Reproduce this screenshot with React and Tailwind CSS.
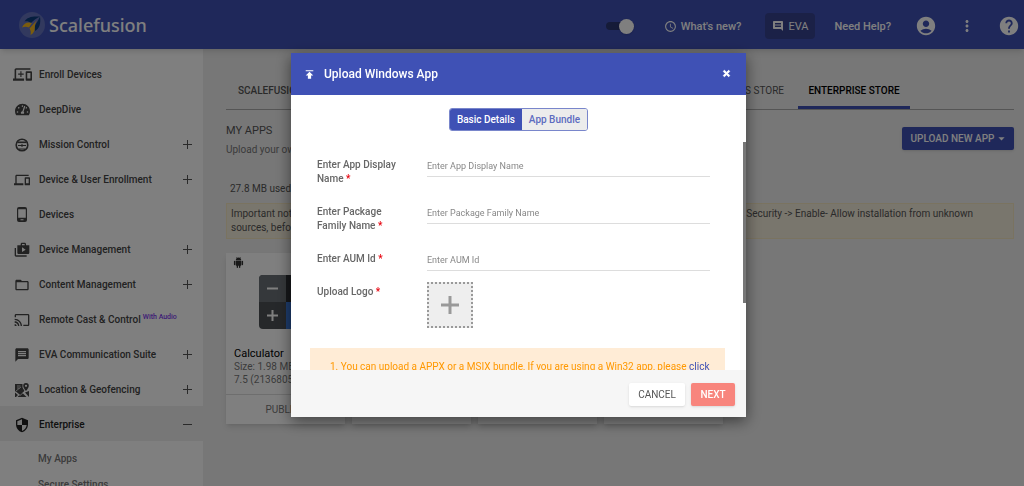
import React, { useState } from "react";
import {
  MdAccessTime,
  MdAccountCircle,
  MdArrowDropDown,
  MdCast,
  MdComment,
  MdDevices,
  MdFolderOpen,
  MdHelp,
  MdMessage,
  MdMoreVert,
  MdPublish,
  MdSecurity,
} from "react-icons/md";
import { FaTachometerAlt, FaTimes } from "react-icons/fa";

const Logo = () => (
  <svg viewBox="0 0 26 26" className="h-[26px] w-[26px]" aria-hidden="true">
    <circle cx="13" cy="13" r="13" fill="#6472bd" />
    <path d="M21 4.500C13 4 8 5 5.500 9.500c2.500-.5 4.500 0 6.500 1.500 2.500-2.500 5-4.500 9-6.500z" fill="#0b3c7d" />
    <path d="M21 4.500c1 7-.5 12-5 14.500-.5-2.500-.5-4 .5-6.500 2-2.500 3-5 4.500-8z" fill="#0b3c7d" />
    <path d="M3 15.500C5 11 8.500 9.500 13 11l-3 4.500c-2.500-1-4.500-1-7 0z" fill="#f5b81c" />
    <path d="M10.500 16.500L18 8c-1.800 3.500-2.200 5-2.200 8s-1.300 5.500-4.300 7c.6-2.800.3-4.500-1-6.500z" fill="#f5b81c" />
  </svg>
);

const EnrollIcon = () => (
  <svg viewBox="0 0 24 24" className="h-[19px] w-[19px]" fill="currentColor">
    <path d="M4 6h18V4H4c-1.100 0-2 .9-2 2v11H0v3h14v-3H4V6zm19 2h-6c-.55 0-1 .45-1 1v10c0 .55.450 1 1 1h6c.55 0 1-.45 1-1V9c0-.55-.45-1-1-1zm-1 9h-4v-7h4v7z" />
    <path d="M9.300 8h1.400v2.800h2.800v1.400h-2.800V15H9.300v-2.800H6.500v-1.400h2.800z" />
  </svg>
);

const MissionIcon = () => (
  <svg viewBox="0 0 14 14" className="h-[14px] w-[14px]" fill="none" stroke="currentColor">
    <circle cx="7" cy="7" r="5.800" strokeWidth="1.600" />
    <path d="M2.500 4.300h9" strokeWidth="1.600" />
    <path d="M3 7.500h8M4 11h6" strokeWidth="1" />
    <path d="M6 7.500h2" strokeWidth="2" />
  </svg>
);

const PhoneIcon = () => (
  <svg viewBox="0 0 10 15" className="h-[15px] w-[10px]" fill="currentColor">
    <path fillRule="evenodd" d="M2 0h6a2 2 0 0 1 2 2v11a2 2 0 0 1-2 2H2a2 2 0 0 1-2-2V2a2 2 0 0 1 2-2zm-.8 2.200v8.600h7.600V2.200zM3.500 12.300v1h3v-1z" />
  </svg>
);

const ManageIcon = () => (
  <svg viewBox="0 0 24 24" className="h-4 w-4" fill="currentColor">
    <path d="M3 9H1v11c0 1.110.89 2 2 2h16v-2H3V9z" />
    <path d="M18 5V3c0-1.110-.89-2-2-2h-4c-1.110 0-2 .89-2 2v2H5v11c0 1.110.89 2 2 2h14c1.110 0 2-.89 2-2V5h-5zm-6-2h4v2h-4V3zm0 12V8l5.500 3.500L12 15z" fillRule="evenodd" />
  </svg>
);

const LocationIcon = () => (
  <svg viewBox="0 0 14 14" className="h-[14px] w-[14px]" fill="currentColor">
    <path d="M0 1h7.500v3.500L9.500 8 5 12 0 8z" />
    <path d="M11 0a2.800 2.800 0 0 0-2.800 2.800C8.200 5 11 8 11 8s2.800-3 2.800-5.200A2.800 2.800 0 0 0 11 0zm0 3.900a1.100 1.100 0 1 1 0-2.200 1.100 1.100 0 0 1 0 2.200z" />
    <path d="M0 9.500L3 12l-2 2H0zM14 8v6l-4-4.500zM2.500 14L7 9.500l4.500 4.500z" />
    <path d="M2 3h3.500M2 5h2.500M1 8l5-4M1 9l4 3.500L10 8" stroke="#fff" strokeWidth=".7" fill="none" />
  </svg>
);

const AndroidIcon = () => (
  <svg viewBox="0 0 24 24" className="h-[11px] w-[11px]" fill="currentColor">
    <path d="M6 18c0 .55.450 1 1 1h1v3.500a1.500 1.500 0 0 0 3 0V19h2v3.500a1.500 1.500 0 0 0 3 0V19h1c.55 0 1-.45 1-1V8H6v10zM3.500 8A1.500 1.500 0 0 0 2 9.500v7a1.500 1.500 0 0 0 3 0v-7A1.500 1.500 0 0 0 3.500 8zm17 0A1.500 1.500 0 0 0 19 9.500v7a1.500 1.500 0 0 0 3 0v-7A1.500 1.500 0 0 0 20.500 8zM6 7a6 6 0 0 1 2.300-4.700L6.800.8l.7-.7 1.700 1.700a6 6 0 0 1 5.600 0L16.500.1l.7.7-1.500 1.500A6 6 0 0 1 18 7z" />
  </svg>
);

const menu = [
  { label: "Enroll Devices", icon: <EnrollIcon /> },
  { label: "DeepDive", icon: <FaTachometerAlt size={15} /> },
  { label: "Mission Control", icon: <MissionIcon />, sign: "+" },
  { label: "Device & User Enrollment", icon: <MdDevices size={16} />, sign: "+" },
  { label: "Devices", icon: <PhoneIcon /> },
  { label: "Device Management", icon: <ManageIcon />, sign: "+" },
  { label: "Content Management", icon: <MdFolderOpen size={16} />, sign: "+" },
  { label: "Remote Cast & Control", icon: <MdCast size={16} />, note: "With Audio" },
  { label: "EVA Communication Suite", icon: <MdMessage size={16} />, sign: "+" },
  { label: "Location & Geofencing", icon: <LocationIcon />, sign: "+" },
  { label: "Enterprise", icon: <MdSecurity size={16} />, sign: "-", active: true },
];

const fields = [
  { id: "displayName", label: "Enter App Display Name", placeholder: "Enter App Display Name" },
  { id: "packageName", label: "Enter Package Family Name", placeholder: "Enter Package Family Name" },
  { id: "aumId", label: "Enter AUM Id", placeholder: "Enter AUM Id" },
];

const Header = () => (
  <header className="relative z-10 flex h-[49px] shrink-0 items-center bg-[#3f51b5] pr-1 pl-[19px] text-white shadow-md">
    <a href="#home" className="flex items-center gap-1">
      <Logo />
      <span className="font-['Noto_Sans',sans-serif] text-lg font-medium">Scalefusion</span>
    </a>

    <div className="ml-auto flex items-center pt-[3px] text-[11px] font-medium">
      <label className="relative mr-[30px] flex h-4 w-7 items-center">
        <input type="checkbox" defaultChecked aria-label="Toggle theme" className="peer sr-only" />
        <span className="h-2 w-full rounded-full bg-[#2b3670]" />
        <span className="absolute right-0 h-[15px] w-[15px] rounded-full bg-white shadow" />
      </label>
      <a href="#new" className="mr-6 flex items-center gap-1">
        <MdAccessTime size={13} />
        <span className="pt-0.5">What's new?</span>
      </a>
      <button className="mr-[19px] flex h-[26px] w-[50px] items-center justify-center gap-1 rounded-sm bg-[#36428f] font-normal">
        <MdComment size={12} />
        <span className="pt-0.5">EVA</span>
      </button>
      <a href="#help" className="mr-6 pt-0.5">Need Help?</a>
      <button aria-label="Account" className="mr-[21px]"><MdAccountCircle size={22} /></button>
      <button aria-label="More" className="mr-[22px]"><MdMoreVert size={18} /></button>
      <button aria-label="Help"><MdHelp size={22} /></button>
    </div>
  </header>
);

const Sidebar = () => (
  <nav className="w-[203px] shrink-0 overflow-hidden bg-white pt-[7px] text-[10px] font-medium text-[#444]">
    {menu.map((item) => (
      <a
        key={item.label}
        href="#menu"
        className={`flex h-[35px] items-center pt-0.5 pr-[11px] pl-3 whitespace-nowrap ${item.active ? "bg-[#eee] text-[#222]" : ""}`}
      >
        <span className="mr-[7px] flex w-5 justify-center">{item.icon}</span>
        {item.label}
        {item.note && <span className="ml-0.5 pb-1 text-[7px] text-[#7c3aed]">{item.note}</span>}
        {item.sign && (
          <svg viewBox="0 0 9 9" className="ml-auto h-[9px] w-[9px]" stroke="#555" strokeWidth="1">
            <path d={item.sign === "+" ? "M0 4.500h9M4.500 0v9" : "M0 4.500h9"} />
          </svg>
        )}
      </a>
    ))}
    <div className="flex flex-col pt-[5px] pl-[38px] leading-[26px] text-[#777]">
      <a href="#apps">My Apps</a>
      <a href="#secure">Secure Settings</a>
    </div>
  </nav>
);

const CalculatorLogo = () => (
  <svg viewBox="0 0 54 54" className="mx-auto h-[54px] w-[54px]" aria-hidden="true">
    <rect width="54" height="54" rx="4" fill="#4c5055" />
    <path d="M4 0h23v27H0V4a4 4 0 0 1 4-4z" fill="#6b7177" />
    <path d="M27 0h23a4 4 0 0 1 4 4v23H27z" fill="#2d3035" />
    <path d="M27 27h27v23a4 4 0 0 1-4 4H27z" fill="#3c78d8" />
    <path d="M8 13.500h11M8 40.500h11M13.500 35v11" stroke="#fff" strokeWidth="2" />
  </svg>
);

const StoreCard = ({ app }) => (
  <article className="flex h-[171px] w-[119px] shrink-0 flex-col bg-white shadow-md">
    {app && (
      <>
        <div className="h-[22px] pt-1 pl-[7px] text-[#333]"><AndroidIcon /></div>
        <CalculatorLogo />
        <div className="mt-[18px] overflow-hidden pl-2 text-[10px] leading-[13px] whitespace-nowrap text-[#777]">
          <h3 className="text-[11px] text-black">Calculator</h3>
          <p>Size: 1.98 MB</p>
          <p>7.5 (21368054)</p>
        </div>
        <button className="mt-auto h-[30px] border-t border-[#ddd] text-[10px] text-[#777]">PUBLISH</button>
      </>
    )}
  </article>
);

const Store = () => (
  <main className="min-w-0 flex-1 overflow-hidden bg-[#eee] pt-[22px] pr-[10px] pl-[23px] text-[10px] text-[#555]">
    <div className="flex h-[39px] justify-between border-b border-[#aaa] font-medium">
      <a href="#scalefusion" className="flex items-center pl-3">SCALEFUSION STORE</a>
      <div className="mr-[104px] flex">
        <a href="#windows" className="flex items-center px-[14px] font-normal">WINDOWS STORE</a>
        <a href="#enterprise" className="flex w-[112px] items-center justify-center border-b-3 border-[#3f51b5] pt-[3px] text-black">
          ENTERPRISE STORE
        </a>
      </div>
    </div>

    <div className="mt-[13px] flex items-start justify-between">
      <div>
        <h2 className="text-[11px] leading-4">MY APPS</h2>
        <p className="mt-1 leading-[14px] text-[#777]">Upload your own apps and distribute them</p>
      </div>
      <button className="mt-1 flex h-[23px] w-[112px] items-center justify-center rounded-xs bg-[#3f51b5] pl-1 font-medium text-white shadow">
        UPLOAD NEW APP
        <MdArrowDropDown size={15} />
      </button>
    </div>

    <p className="mt-6 pl-1 leading-4">27.8 MB used of 5 GB</p>

    <div className="mt-[6px] flex h-9 justify-between border border-[#f5e6c0] bg-[#f3ecda] px-1 pt-[3px] leading-[14px]">
      <p className="w-[140px]">Important note: To install sources, before publishing</p>
      <p className="mr-9">Settings -&gt; Security -&gt; Enable- Allow installation from unknown</p>
    </div>

    <div className="mt-[14px] flex gap-[7px]">
      <StoreCard app />
      <StoreCard />
      <StoreCard />
      <StoreCard />
    </div>
  </main>
);

const UploadModal = () => {
  const [tab, setTab] = useState("basic");

  return (
    <div className="fixed inset-0 z-20 flex items-start justify-center bg-black/50 pt-[53px] pl-[13px]">
      <section role="dialog" aria-label="Upload Windows App" className="w-[455px] bg-white text-[10px] shadow-[0_4px_14px_rgba(0,0,0,0.5)]">

        {/* Title */}
        <div className="flex h-[42px] items-center bg-[#3f51b5] pr-[15px] pl-3 text-white">
          <MdPublish size={13} />
          <h1 className="ml-2 text-[12px] font-medium">Upload Windows App</h1>
          <button aria-label="Close" className="ml-auto pb-0.5">
            <FaTimes size={9} stroke="currentColor" strokeWidth="50" />
          </button>
        </div>

        {/* Steps */}
        <div className="flex h-[47px] justify-center pt-[13px]">
          <div className="flex h-[23px] overflow-hidden rounded-[3px] border border-[#7986cb] font-medium">
            <button onClick={() => setTab("basic")} className="bg-[#3f51b5] px-[7px] text-white">
              Basic Details
            </button>
            <button onClick={() => setTab("bundle")} className="bg-[#ececec] px-[7px] text-[#5c6bc0]">
              App Bundle
            </button>
          </div>
        </div>

        {/* Form */}
        <div className="relative h-[228px] overflow-hidden">
          <form id="upload" data-step={tab} className="pt-[13px] pr-9 pl-[26px]">
            <div className="flex flex-col gap-[14px]">
              {fields.map((field) => (
                <div key={field.id} className="flex h-[33px] items-start">
                  <label htmlFor={field.id} className="w-[110px] shrink-0 pt-[3px] pr-6 leading-[14px] font-medium text-[#666]">
                    {field.label} <span className="text-red-600">*</span>
                  </label>
                  <input
                    id={field.id}
                    placeholder={field.placeholder}
                    className="h-[22px] min-w-0 flex-1 border-b border-[#ddd] text-[9px] outline-none placeholder:text-[#888]"
                  />
                </div>
              ))}
            </div>
            <div className="flex items-start">
              <label htmlFor="logo" className="w-[110px] shrink-0 pt-[3px] leading-[14px] font-medium text-[#666]">
                Upload Logo <span className="text-red-600">*</span>
              </label>
              <button id="logo" type="button" aria-label="Upload Logo" className="flex h-[46px] w-[46px] items-center justify-center border-2 border-dotted border-[#999] bg-[#eee]">
                <svg viewBox="0 0 18 18" className="h-[18px] w-[18px]" stroke="#999" strokeWidth="3">
                  <path d="M0 9h18M9 0v18" />
                </svg>
              </button>
            </div>
          </form>
          <div className="mt-5 mr-[21px] ml-[19px] h-14 bg-[#ffecd6] pt-3 pl-5 leading-[14px] whitespace-nowrap text-[#ff9800]">
            1. You can upload a APPX or a MSIX bundle, If you are using a Win32 app, please{" "}
            <a href="#win32" className="text-[#3f51b5]">click</a>
          </div>
          <div className="absolute top-0 right-0 h-[161px] w-[3px] bg-[#777]" />
        </div>

        {/* Actions */}
        <div className="flex h-[47px] items-end justify-end gap-[6px] bg-[#f6f6f6] pr-[11px] pb-[11px]">
          <button className="h-[23px] w-[56px] rounded-xs bg-white text-[#555] shadow">CANCEL</button>
          <button form="upload" type="button" className="h-[23px] w-[44px] rounded-xs bg-[#f8857d] font-medium text-white shadow">NEXT</button>
        </div>
      </section>
    </div>
  );
};

const App = () => (
  <div className="flex h-screen flex-col overflow-hidden font-[Roboto,sans-serif]">
    <Header />
    <div className="flex min-h-0 flex-1">
      <Sidebar />
      <Store />
    </div>
    <UploadModal />
  </div>
);

export default App;
